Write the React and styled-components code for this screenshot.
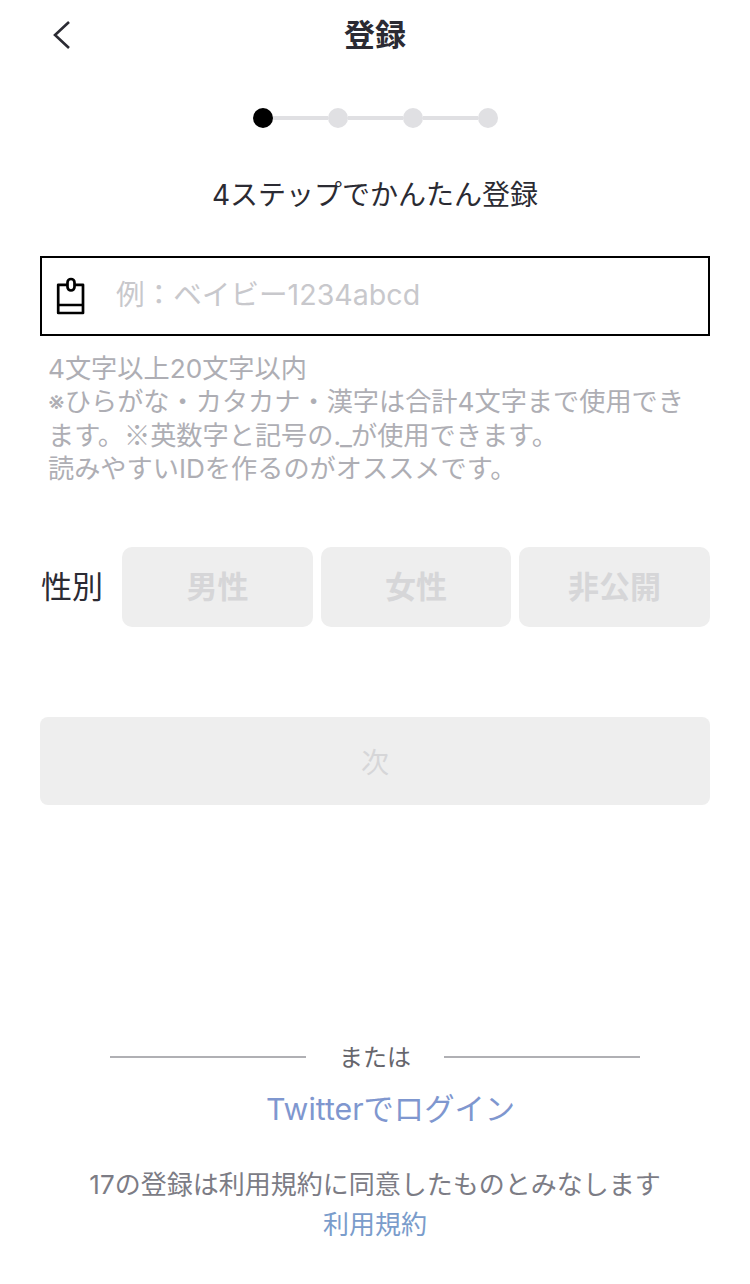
import React from "react"
import styled, { createGlobalStyle } from "styled-components"

const GlobalStyle = createGlobalStyle`
  html, body {
    margin: 0;
    padding: 0;
    background: #fff;
  }
  * {
    box-sizing: border-box;
  }
`

const steps = [true, false, false, false]
const genders = ["男性", "女性", "非公開"]

const App = () => (
  <Page lang="ja">
    <GlobalStyle />
    <Header>
      <BackButton aria-label="戻る">
        <svg width="20" height="30" viewBox="0 0 20 30" fill="none">
          <path d="M17 2 L3 15 L17 28" stroke="#2b2b33" strokeWidth="2.6" />
        </svg>
      </BackButton>
      <Title>登録</Title>
    </Header>

    <Stepper>
      {steps.map((active, i) => (
        <React.Fragment key={i}>
          {i > 0 && <StepLine />}
          <StepDot active={active} />
        </React.Fragment>
      ))}
    </Stepper>
    <StepLabel>4ステップでかんたん登録</StepLabel>

    <Field>
      <svg width="30" height="38" viewBox="0 0 30 38" fill="none">
        <path
          d="M11.5 7.8 H2.2 V36 H27 V7.8 H18.5 M2.2 28 H27"
          stroke="#000"
          strokeWidth="2.7"
          strokeLinejoin="round"
        />
        <rect x="11.5" y="2" width="7" height="11.5" rx="3.5" stroke="#000" strokeWidth="2.7" />
      </svg>
      <Placeholder>例：ベイビー1234abcd</Placeholder>
    </Field>

    <Hints>
      <HintLine>4文字以上20文字以内</HintLine>
      <HintLine>※ひらがな・カタカナ・漢字は合計4文字まで使用でき</HintLine>
      <HintLine>
        ます。<BigMark>※</BigMark>英数字と記号の<Tight>._</Tight>が使用できます。
      </HintLine>
      <HintLine>読みやすいIDを作るのがオススメです。</HintLine>
    </Hints>

    <GenderRow>
      <GenderLabel>性別</GenderLabel>
      {genders.map(g => (
        <GenderButton key={g}>{g}</GenderButton>
      ))}
    </GenderRow>

    <NextButton>次</NextButton>

    <Divider>
      <DividerLine />
      <DividerText>または</DividerText>
      <DividerLine />
    </Divider>
    <TwitterLink>Twitterでログイン</TwitterLink>
    <Terms>17の登録は利用規約に同意したものとみなします</Terms>
    <TermsLink>利用規約</TermsLink>
  </Page>
)

const Page = styled.div`
  width: 750px;
  height: 1284px;
  overflow: hidden;
  padding: 0 40px;
  display: flex;
  flex-direction: column;
  font-family: Inter, "Noto Sans CJK JP", sans-serif;
  color: #2b2b33;
`

const Header = styled.header`
  height: 68px;
  position: relative;
  display: flex;
  align-items: center;
  justify-content: center;
`

const BackButton = styled.div`
  position: absolute;
  left: 12px;
  top: 20px;
  display: flex;
`

const Title = styled.h1`
  margin: 0;
  padding-top: 2px;
  font-size: 31px;
  font-weight: 700;
  line-height: 66px;
`

const Stepper = styled.div`
  margin-top: 40px;
  height: 20px;
  display: flex;
  align-items: center;
  justify-content: center;
`

const StepDot = styled.span`
  width: 20px;
  height: 20px;
  border-radius: 50%;
  background: ${props => (props.active ? "#000" : "#e0e0e3")};
`

const StepLine = styled.span`
  width: 55px;
  height: 4px;
  background: #e0e0e3;
`

const StepLabel = styled.div`
  margin-top: 47px;
  height: 40px;
  font-size: 28px;
  line-height: 40px;
  text-align: center;
`

const Field = styled.div`
  margin-top: 41px;
  height: 80px;
  border: 2px solid #000;
  display: flex;
  align-items: center;
  padding-left: 14px;
  gap: 30px;
`

const Placeholder = styled.span`
  font-size: 28.6px;
  line-height: 40px;
  padding-bottom: 2px;
  color: #c8c8cc;
`

const Hints = styled.div`
  margin-top: 16px;
  padding-left: 8px;
  font-size: 26.2px;
  color: #aeaeb4;
  white-space: nowrap;
`

const HintLine = styled.div`
  height: 33.4px;
  line-height: 33.4px;
`

const BigMark = styled.span`
  font-family: "Noto Sans CJK JP", sans-serif;
  line-height: 1;
`

const Tight = styled.span`
  letter-spacing: -1px;
`

const GenderRow = styled.div`
  margin-top: 61px;
  height: 80px;
  display: grid;
  grid-template-columns: 74px 191px 190px 191px;
  column-gap: 8px;
  align-items: center;
`

const GenderLabel = styled.span`
  font-size: 31px;
  padding: 0 0 4px 1px;
  white-space: nowrap;
`

const GenderButton = styled.div`
  height: 80px;
  padding-bottom: 4px;
  border-radius: 10px;
  background: #eee;
  color: #d6d6d8;
  font-size: 31px;
  font-weight: 700;
  display: flex;
  align-items: center;
  justify-content: center;
`

const NextButton = styled.div`
  margin-top: 90px;
  height: 88px;
  border-radius: 8px;
  background: #eee;
  color: #d6d6d8;
  font-size: 28px;
  display: flex;
  align-items: center;
  justify-content: center;
`

const Divider = styled.div`
  margin-top: 232px;
  height: 40px;
  display: flex;
  align-items: center;
  justify-content: center;
  gap: 33px;
`

const DividerLine = styled.span`
  width: 196px;
  height: 2px;
  background: #b0b0b4;
`

const DividerText = styled.span`
  padding-bottom: 2px;
  font-size: 24px;
  color: #66666c;
`

const TwitterLink = styled.div`
  margin-top: 12px;
  height: 40px;
  padding-left: 31px;
  font-size: 30.3px;
  line-height: 40px;
  text-align: center;
  color: #7f97cf;
`

const Terms = styled.div`
  margin-top: 36px;
  height: 40px;
  font-size: 26px;
  line-height: 40px;
  text-align: center;
  color: #7c7c85;
`

const TermsLink = styled.div`
  height: 40px;
  font-size: 26px;
  line-height: 40px;
  text-align: center;
  color: #7a9ccb;
`

export default App
